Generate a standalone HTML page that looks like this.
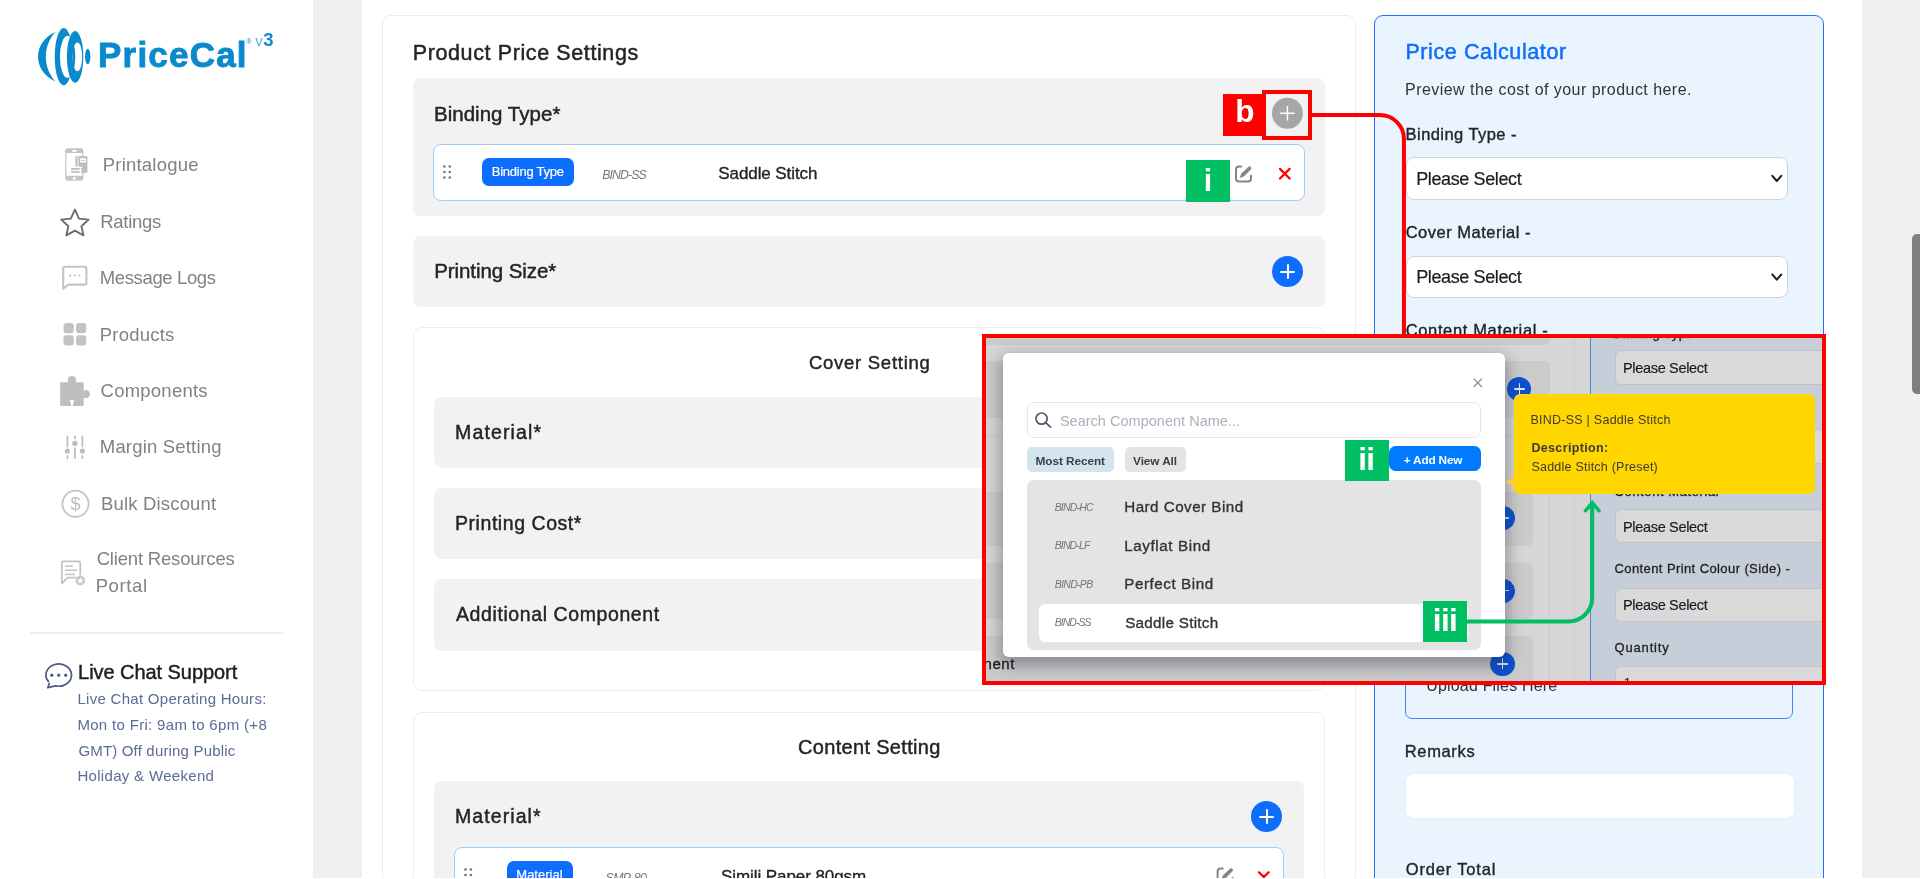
<!DOCTYPE html>
<html lang="en">
<head>
<meta charset="utf-8">
<title>PriceCal v3 - Product Price Settings</title>
<style>
*{box-sizing:border-box;margin:0;padding:0}
html,body{width:1920px;height:879px;overflow:hidden;background:#fff}
body{position:relative;font-family:"Liberation Sans",sans-serif;color:#212529}
.layer{position:absolute;left:0;top:0;width:1920px;height:879px;overflow:hidden;will-change:transform}
.t{position:absolute;white-space:nowrap;display:block}
.abs{position:absolute}
.sec{position:absolute;background:#f2f2f2;border-radius:8px}
.card{position:absolute;border:1px solid #ececf0;border-radius:9px;background:#fff}
.row{position:absolute;background:#fff;border:1px solid #9fcdfb;border-radius:8px}
.badge{position:absolute;background:#0d6efd;border-radius:7px}
.plus{position:absolute;width:31px;height:31px;border-radius:50%;background:#0d6efd}
.plus:before,.plus:after{content:"";position:absolute;background:#fff;left:50%;top:50%}
.plus:before{width:14.6px;height:2px;margin:-1px 0 0 -7.3px;border-radius:1px}
.plus:after{width:2px;height:14.6px;margin:-7.3px 0 0 -1px;border-radius:1px}
.plus.sm:before{width:11.4px;height:1.5px;margin:-.75px 0 0 -5.7px;background:#e3e8f3}
.plus.sm:after{width:1.5px;height:11.4px;margin:-5.7px 0 0 -.75px;background:#e3e8f3}
.osel{width:300px;background:#d9d9d9;border:1px solid #bfc3c9;border-radius:6px}
.sel{position:absolute;background:#fff;border:1px solid #cfd3d8;border-radius:8px}
svg{position:absolute;overflow:visible}
</style>
</head>
<body>

<!-- ================= SIDEBAR ================= -->
<div class="layer" id="side">
<svg style="left:0;top:0" width="320" height="879" viewBox="0 0 320 879">
<!-- logo mark -->
<g fill="#0a8acc">
<path d="M55.6 31.9C32.3 42 32.3 71 55.6 81.4C42.7 68 42.7 45 55.6 31.9Z"/>
<path fill-rule="evenodd" d="M63.7 28.1A9 28.6 0 0 1 63.7 85.3A9 28.6 0 0 1 63.7 28.1ZM67.6 35.8A7.7 21.1 0 0 1 67.6 78A7.7 21.1 0 0 1 67.6 35.8Z"/>
<path fill-rule="evenodd" d="M75.1 31.1A8.2 25.8 0 0 1 75.1 82.7A8.2 25.8 0 0 1 75.1 31.1ZM77.4 42.5A4.8 14.4 0 0 1 77.4 71.3A4.8 14.4 0 0 1 77.4 42.5Z"/>
<ellipse cx="87.7" cy="56.5" rx="2.7" ry="7.7"/>
</g>
<!-- printalogue: phone + catalogue -->
<g>
<rect x="65.2" y="148.2" width="18.2" height="32.5" rx="3" fill="#c4c4c4"/>
<rect x="66.4" y="153" width="15.8" height="22.8" fill="#fff"/>
<rect x="72" y="149.9" width="5" height="1.8" rx=".6" fill="#fff"/>
<circle cx="74.3" cy="178.2" r="1.5" fill="#fff"/>
<rect x="75.5" y="156.1" width="11.9" height="16.7" fill="#bdbdbd"/>
<rect x="77.2" y="156.1" width="1.6" height="16.7" fill="#e2e2e2"/>
<rect x="80" y="158.2" width="6" height="4.4" rx=".8" fill="#fff"/>
<rect x="81.3" y="160" width="3.4" height="1" fill="#c4c4c4"/>
<rect x="70.3" y="166.6" width="11.8" height="7" fill="#fff"/>
<rect x="71.1" y="168" width="8.6" height="1.8" fill="#bdbdbd"/><rect x="80.9" y="168" width="1.2" height="1.8" fill="#bdbdbd"/>
<rect x="71.1" y="171" width="8.6" height="1.8" fill="#bdbdbd"/><rect x="80.9" y="171" width="1.2" height="1.8" fill="#bdbdbd"/>
</g>
<!-- ratings star -->
<path d="M74.9 209.6 79 218.6 88.6 219.6 81.4 226.2 83.5 235.4 74.9 230.6 66.3 235.4 68.4 226.2 61.2 219.6 70.8 218.6Z" fill="none" stroke="#6d6d6d" stroke-width="1.9" stroke-linejoin="round"/>
<!-- message logs -->
<g fill="none" stroke="#c4c4c4" stroke-width="2.1" stroke-linejoin="round">
<path d="M63.2 268.2Q63.2 266.8 64.6 266.8H85Q86.4 266.8 86.4 268.2V283.2Q86.4 284.6 85 284.6H68.4L63.2 288.6Z"/>
</g>
<g fill="#c2c2c2"><rect x="69.2" y="274.6" width="2" height="1.8"/><rect x="73.8" y="274.6" width="2" height="1.8"/><rect x="78.4" y="274.6" width="2" height="1.8"/></g>
<!-- products -->
<g fill="#c3c3c3"><rect x="63.5" y="323" width="10.3" height="10.3" rx="3"/><rect x="76" y="323" width="10.3" height="10.3" rx="3"/><rect x="63.5" y="335.3" width="10.3" height="10.3" rx="3"/><rect x="76" y="335.3" width="10.3" height="10.3" rx="3"/></g>
<!-- components puzzle -->
<g fill="#bebebe">
<rect x="60.2" y="382.3" width="23.5" height="23.6" rx="1"/>
<circle cx="71.9" cy="380.1" r="4.1"/><circle cx="85.8" cy="394.1" r="4.2"/>
</g>
<circle cx="71.9" cy="401.6" r="2.1" fill="#fff"/><rect x="71" y="402.5" width="1.9" height="4" fill="#fff"/>
<!-- margin setting sliders -->
<g stroke="#bdbdbd" stroke-width="1.7" stroke-linecap="round">
<path d="M67.4 436.4V446.6M67.4 455.8V458.2M74.9 436.4V438.6M74.9 448V458.2M82.4 436.4V446.6M82.4 455.8V458.2"/>
</g>
<g fill="#bdbdbd"><circle cx="67.4" cy="451" r="2.6"/><circle cx="74.9" cy="443.4" r="2.7"/><circle cx="82.4" cy="451" r="2.6"/></g>
<!-- bulk discount -->
<circle cx="75.5" cy="503.8" r="13.1" fill="none" stroke="#c4c4c4" stroke-width="1.7"/>
<text x="75.6" y="510.2" font-family="Liberation Sans, sans-serif" font-size="18" fill="#bdbdbd" text-anchor="middle">$</text>
<!-- client resources -->
<g fill="none" stroke="#c2c2c2" stroke-width="1.7" stroke-linejoin="round">
<path d="M61.8 562.9Q61.8 561.4 63.3 561.4H78.8Q80.3 561.4 80.3 562.9V577.6H67.6L61.8 583.6Z"/>
</g>
<g fill="#c6c6c6"><rect x="65" y="565.2" width="7.8" height="1.6"/><rect x="65" y="569.5" width="12" height="1.6"/><rect x="65" y="573.6" width="10" height="1.6"/></g>
<circle cx="80.3" cy="580.6" r="5" fill="#c2c2c2" stroke="#fff" stroke-width=".8"/>
<path d="M80.3 577.3 81.3 579.6 83.7 579.8 81.9 581.4 82.4 583.8 80.3 582.5 78.2 583.8 78.7 581.4 76.9 579.8 79.3 579.6Z" fill="#fff"/>
<!-- live chat -->
<g fill="none" stroke="#4a5a85" stroke-width="1.7" stroke-linejoin="round">
<path d="M48.9 682.2A12.8 11.1 0 1 1 55.4 685.8L47.7 687.7L49.6 682.9"/>
</g>
<g fill="#4a5a85"><circle cx="51.8" cy="675.2" r="1.6"/><circle cx="58.7" cy="675.2" r="1.6"/><circle cx="65.7" cy="675.2" r="1.6"/></g>
</svg>

<div class="abs" style="left:30px;top:632px;width:253px;height:2px;background:#ededed"></div>
<span class="t" style="left:98.00px;top:37.00px;font-size:35px;line-height:35px;color:#0a8acc;font-weight:700;letter-spacing:1.206px;-webkit-text-stroke:0.9px currentColor;">PriceCal</span>
<span class="t" style="left:246.30px;top:38.00px;font-size:7px;line-height:7px;color:#0b8bd6;">®</span>
<span class="t" style="left:255.30px;top:33.00px;font-size:15px;line-height:15px;color:#5fb0e0;">v</span>
<span class="t" style="left:263.30px;top:31.00px;font-size:18.5px;line-height:18.5px;color:#0b8bd6;font-weight:700;">3</span>
<span class="t" style="left:102.70px;top:156.00px;font-size:18.5px;line-height:18.5px;color:#828282;letter-spacing:0.220px;">Printalogue</span>
<span class="t" style="left:100.30px;top:213.00px;font-size:18.5px;line-height:18.5px;color:#828282;letter-spacing:-0.296px;">Ratings</span>
<span class="t" style="left:99.80px;top:269.00px;font-size:18.5px;line-height:18.5px;color:#828282;letter-spacing:-0.379px;">Message Logs</span>
<span class="t" style="left:99.80px;top:326.00px;font-size:18.5px;line-height:18.5px;color:#828282;letter-spacing:0.206px;">Products</span>
<span class="t" style="left:100.60px;top:382.00px;font-size:18.5px;line-height:18.5px;color:#828282;letter-spacing:0.228px;">Components</span>
<span class="t" style="left:99.80px;top:438.00px;font-size:18.5px;line-height:18.5px;color:#828282;letter-spacing:0.185px;">Margin Setting</span>
<span class="t" style="left:101.00px;top:495.00px;font-size:18.5px;line-height:18.5px;color:#828282;letter-spacing:0.170px;">Bulk Discount</span>
<span class="t" style="left:96.70px;top:550.00px;font-size:18.5px;line-height:18.5px;color:#828282;letter-spacing:-0.188px;">Client Resources</span>
<span class="t" style="left:95.70px;top:577.00px;font-size:18.5px;line-height:18.5px;color:#828282;letter-spacing:0.596px;">Portal</span>
<span class="t" style="left:78.10px;top:662.00px;font-size:20px;line-height:20px;color:#1e1e1e;letter-spacing:-0.059px;-webkit-text-stroke:0.44px currentColor;">Live Chat Support</span>
<span class="t" style="left:77.40px;top:691.00px;font-size:15px;line-height:15px;color:#5b6b96;letter-spacing:0.288px;">Live Chat Operating Hours:</span>
<span class="t" style="left:77.40px;top:717.00px;font-size:15px;line-height:15px;color:#5b6b96;letter-spacing:0.321px;">Mon to Fri: 9am to 6pm (+8</span>
<span class="t" style="left:78.40px;top:743.00px;font-size:15px;line-height:15px;color:#5b6b96;letter-spacing:0.176px;">GMT) Off during Public</span>
<span class="t" style="left:77.40px;top:768.00px;font-size:15px;line-height:15px;color:#5b6b96;letter-spacing:0.317px;">Holiday &amp; Weekend</span>
</div>

<!-- gray gutters -->
<div class="abs" style="left:313px;top:0;width:49px;height:879px;background:#f0f0f0"></div>
<div class="abs" style="left:1862px;top:0;width:58px;height:879px;background:#f0f0f0"></div>
<div class="abs" style="left:1912px;top:234px;width:14px;height:160px;background:#7f7f7f;border-radius:5px"></div>

<!-- ================= MAIN ================= -->
<div class="layer" id="main">
<div class="card" style="left:382px;top:15px;width:974px;height:900px"></div>

<div class="sec" style="left:413px;top:78px;width:912px;height:138px"></div>
<div class="row" style="left:433px;top:144px;width:872px;height:57px"></div>
<div class="badge" style="left:482px;top:158px;width:92px;height:28px"></div>

<div class="sec" style="left:413px;top:236px;width:912px;height:71px"></div>
<div class="plus" style="left:1272px;top:256px"></div>

<div class="card" style="left:413px;top:327px;width:912px;height:364px"></div>
<div class="sec" style="left:434px;top:396.5px;width:870px;height:71px"></div>
<div class="sec" style="left:434px;top:487.5px;width:870px;height:71px"></div>
<div class="sec" style="left:434px;top:578.5px;width:870px;height:72px"></div>

<div class="card" style="left:413px;top:712px;width:912px;height:300px"></div>
<div class="sec" style="left:434px;top:781px;width:870px;height:200px"></div>
<div class="plus" style="left:1251px;top:801px"></div>
<div class="row" style="left:454px;top:847px;width:830px;height:57px"></div>
<div class="badge" style="left:507px;top:861px;width:66px;height:28px"></div>
<svg style="left:0;top:0" width="1920" height="879" viewBox="0 0 1920 879">
<defs>
<g id="drag" fill="#6e7a90"><circle cx="0" cy="0" r="1.35"/><circle cx="5.4" cy="0" r="1.35"/><circle cx="0" cy="5.5" r="1.35"/><circle cx="5.4" cy="5.5" r="1.35"/><circle cx="0" cy="11" r="1.35"/><circle cx="5.4" cy="11" r="1.35"/></g>
<g id="edit" fill="none" stroke="#858585" stroke-width="2" stroke-linecap="round" stroke-linejoin="round">
<path d="M6.2 1H4Q1 1 1 4V13Q1 16 4 16H13Q16 16 16 13V10.2"/>
<path d="M5.6 11.4 6.6 8.2 13.6 1.6Q14.7.8 15.6 1.7Q16.4 2.7 15.6 3.6L8.8 10.4Z" fill="#858585" stroke-width="1"/>
</g>
<g id="xred" fill="none" stroke="#ff0000" stroke-width="2.3" stroke-linecap="round"><path d="M1.2 1.2 10.8 10.8M10.8 1.2 1.2 10.8"/></g>
</defs>
<use href="#drag" x="444.4" y="166.5"/>
<use href="#edit" x="1235" y="165.6"/>
<use href="#xred" x="1278.8" y="167.7"/>
<!-- disabled add button (binding type) -->
<circle cx="1287.4" cy="113.3" r="15.5" fill="#a6a6a6"/>
<path d="M1280.2 113.3H1294.6M1287.4 106.1V120.5" stroke="#fff" stroke-width="1.5" fill="none"/>
<!-- content material row (cut off by viewport) -->
<use href="#drag" x="465.5" y="869.5"/>
<use href="#edit" x="1216.6" y="867.5"/>
<use href="#xred" x="1257.8" y="871"/>
</svg>

<span class="t" style="left:412.75px;top:43.00px;font-size:21.5px;line-height:21.5px;color:#212529;letter-spacing:0.609px;-webkit-text-stroke:0.47px currentColor;">Product Price Settings</span>
<span class="t" style="left:434.00px;top:104.00px;font-size:20.5px;line-height:20.5px;color:#212529;letter-spacing:0.019px;-webkit-text-stroke:0.45px currentColor;">Binding Type*</span>
<span class="t" style="left:491.70px;top:165.00px;font-size:13px;line-height:13px;color:#fff;letter-spacing:-0.230px;-webkit-text-stroke:0.2px currentColor;">Binding Type</span>
<span class="t" style="left:602.30px;top:169.00px;font-size:12.3px;line-height:12.3px;color:#777;font-style:italic;letter-spacing:-0.913px;">BIND-SS</span>
<span class="t" style="left:718.30px;top:165.00px;font-size:17px;line-height:17px;color:#212529;letter-spacing:-0.085px;-webkit-text-stroke:0.35px currentColor;">Saddle Stitch</span>
<span class="t" style="left:434.20px;top:261.00px;font-size:20.5px;line-height:20.5px;color:#212529;letter-spacing:-0.076px;-webkit-text-stroke:0.45px currentColor;">Printing Size*</span>
<span class="t" style="left:808.90px;top:354.00px;font-size:18.5px;line-height:18.5px;color:#212529;letter-spacing:0.734px;-webkit-text-stroke:0.41px currentColor;">Cover Setting</span>
<span class="t" style="left:455.00px;top:423.00px;font-size:19.5px;line-height:19.5px;color:#212529;letter-spacing:1.156px;-webkit-text-stroke:0.43px currentColor;">Material*</span>
<span class="t" style="left:455.00px;top:514.00px;font-size:19.5px;line-height:19.5px;color:#212529;letter-spacing:0.552px;-webkit-text-stroke:0.43px currentColor;">Printing Cost*</span>
<span class="t" style="left:456.00px;top:605.00px;font-size:19.5px;line-height:19.5px;color:#212529;letter-spacing:0.592px;-webkit-text-stroke:0.43px currentColor;">Additional Component</span>
<span class="t" style="left:798.00px;top:737.00px;font-size:20px;line-height:20px;color:#212529;letter-spacing:0.325px;-webkit-text-stroke:0.44px currentColor;">Content Setting</span>
<span class="t" style="left:455.00px;top:807.00px;font-size:19.5px;line-height:19.5px;color:#212529;letter-spacing:1.081px;-webkit-text-stroke:0.43px currentColor;">Material*</span>
<span class="t" style="left:516.30px;top:868.00px;font-size:13px;line-height:13px;color:#fff;letter-spacing:0.007px;-webkit-text-stroke:0.2px currentColor;">Material</span>
<span class="t" style="left:605.60px;top:872.00px;font-size:12.3px;line-height:12.3px;color:#777;font-style:italic;letter-spacing:-0.616px;">SMP-80</span>
<span class="t" style="left:721.00px;top:868.00px;font-size:17px;line-height:17px;color:#212529;letter-spacing:-0.075px;-webkit-text-stroke:0.35px currentColor;">Simili Paper 80gsm</span>
</div>

<!-- ================= PRICE CALCULATOR ================= -->
<div class="layer" id="calc">
<div class="abs" style="left:1374px;top:15px;width:450px;height:900px;background:#eaf4ff;border:1px solid #1a73f8;border-radius:9px"></div>
<div class="sel" style="left:1405.5px;top:156.5px;width:382px;height:43px"></div>
<div class="sel" style="left:1405.5px;top:255.5px;width:382px;height:42.5px"></div>
<div class="abs" style="left:1405px;top:600px;width:388px;height:119.3px;border:1.4px solid #3d86f7;border-radius:7px"></div>
<div class="abs" style="left:1405.5px;top:773.5px;width:388px;height:44.5px;background:#fff;border-radius:7px;box-shadow:0 0 2px rgba(0,0,0,.08)"></div>
<svg style="left:0;top:0" width="1920" height="879" viewBox="0 0 1920 879" fill="none" stroke="#222" stroke-width="2.1" stroke-linecap="round" stroke-linejoin="round">
<path d="M1772.3 175.9 1776.8 181 1781.3 175.9"/>
<path d="M1772.3 274.5 1776.8 279.6 1781.3 274.5"/>
</svg>

<span class="t" style="left:1405.40px;top:42.00px;font-size:21.5px;line-height:21.5px;color:#0d6efd;letter-spacing:0.601px;-webkit-text-stroke:0.47px currentColor;">Price Calculator</span>
<span class="t" style="left:1405.00px;top:82.00px;font-size:16px;line-height:16px;color:#333;letter-spacing:0.459px;">Preview the cost of your product here.</span>
<span class="t" style="left:1405.60px;top:126.00px;font-size:16.5px;line-height:16.5px;color:#212529;letter-spacing:0.432px;-webkit-text-stroke:0.36px currentColor;">Binding Type -</span>
<span class="t" style="left:1416.20px;top:170.00px;font-size:18px;line-height:18px;color:#1c1c1c;letter-spacing:-0.380px;-webkit-text-stroke:0.2px currentColor;">Please Select</span>
<span class="t" style="left:1405.70px;top:224.00px;font-size:16.5px;line-height:16.5px;color:#212529;letter-spacing:0.496px;-webkit-text-stroke:0.36px currentColor;">Cover Material -</span>
<span class="t" style="left:1416.20px;top:268.00px;font-size:18px;line-height:18px;color:#1c1c1c;letter-spacing:-0.380px;-webkit-text-stroke:0.2px currentColor;">Please Select</span>
<span class="t" style="left:1405.70px;top:322.00px;font-size:16.5px;line-height:16.5px;color:#212529;letter-spacing:0.645px;-webkit-text-stroke:0.36px currentColor;">Content Material -</span>
<span class="t" style="left:1426.25px;top:678.00px;font-size:16px;line-height:16px;color:#333;letter-spacing:0.178px;">Upload Files Here</span>
<span class="t" style="left:1404.80px;top:743.00px;font-size:16.5px;line-height:16.5px;color:#212529;letter-spacing:0.640px;-webkit-text-stroke:0.36px currentColor;">Remarks</span>
<span class="t" style="left:1405.80px;top:861.00px;font-size:16.5px;line-height:16.5px;color:#212529;letter-spacing:0.825px;-webkit-text-stroke:0.36px currentColor;">Order Total</span>
</div>

<!-- ================= OVERLAY (zoomed screenshot callout) ================= -->
<div class="layer" id="overlay" style="clip-path:inset(334px 94px 194px 982px)">
<!-- dimmed page behind the modal (0.8x screenshot) -->
<div class="abs" style="left:982px;top:334px;width:844px;height:351px;background:#d6d6d6"></div>
<div class="abs" style="left:900px;top:300px;width:650px;height:44.7px;background:#cbcbcb;border-radius:6px"></div>
<div class="abs" style="left:900px;top:361px;width:650px;height:57px;background:#cbcbcb;border-radius:6px"></div>
<div class="abs" style="left:900px;top:434.5px;width:650px;height:300px;border:1px solid #c9c9cd;border-radius:7px"></div>
<div class="abs" style="left:900px;top:491.8px;width:632.5px;height:54.5px;background:#cbcbcb;border-radius:6px"></div>
<div class="abs" style="left:900px;top:562.6px;width:632.5px;height:56.1px;background:#cbcbcb;border-radius:6px"></div>
<div class="abs" style="left:900px;top:635.5px;width:632.5px;height:57px;background:#cbcbcb;border-radius:6px"></div>
<div class="abs" style="left:1574px;top:334px;width:1px;height:351px;background:#cdcdcd"></div>
<!-- dimmed plus buttons -->
<div class="plus sm" style="left:1507.3px;top:376.8px;width:24px;height:24px;background:#0b51d1;transform:none"></div>
<div class="plus sm" style="left:1491px;top:506px;width:24px;height:24px;background:#0b51d1"></div>
<div class="plus sm" style="left:1491px;top:578.7px;width:24px;height:24px;background:#0b51d1"></div>
<div class="plus sm" style="left:1490.3px;top:651.5px;width:24.5px;height:24.5px;background:#0b51d1"></div>
<!-- dimmed price calculator -->
<div class="abs" style="left:1590px;top:320px;width:300px;height:400px;background:#c6ced9;border-left:1.4px solid #4f84e0"></div>
<div class="abs osel" style="left:1614.5px;top:350.3px;height:35.2px"></div>
<div class="abs osel" style="left:1614.5px;top:429px;height:35px"></div>
<div class="abs osel" style="left:1614.5px;top:508.5px;height:34px"></div>
<div class="abs osel" style="left:1614.5px;top:587.5px;height:34px"></div>
<div class="abs osel" style="left:1614.5px;top:665.5px;height:34px"></div>
<span class="t" style="left:932.30px;top:656.00px;font-size:15px;line-height:15px;color:#1c1c1c;letter-spacing:0.577px;-webkit-text-stroke:0.33px currentColor;">Component</span>
<span class="t" style="left:1613.50px;top:327.00px;font-size:13px;line-height:13px;color:#1e1e1e;letter-spacing:0.479px;-webkit-text-stroke:0.29px currentColor;">Binding Type -</span>
<span class="t" style="left:1614.50px;top:485.00px;font-size:13px;line-height:13px;color:#1e1e1e;letter-spacing:0.589px;-webkit-text-stroke:0.29px currentColor;">Content Material -</span>
<span class="t" style="left:1623.00px;top:361.00px;font-size:14.5px;line-height:14.5px;color:#17171f;letter-spacing:-0.320px;-webkit-text-stroke:0.15px currentColor;">Please Select</span>
<span class="t" style="left:1623.00px;top:520.00px;font-size:14.5px;line-height:14.5px;color:#17171f;letter-spacing:-0.320px;-webkit-text-stroke:0.15px currentColor;">Please Select</span>
<span class="t" style="left:1623.00px;top:598.00px;font-size:14.5px;line-height:14.5px;color:#17171f;letter-spacing:-0.320px;-webkit-text-stroke:0.15px currentColor;">Please Select</span>
<span class="t" style="left:1614.50px;top:562.00px;font-size:13px;line-height:13px;color:#1e1e1e;letter-spacing:0.404px;-webkit-text-stroke:0.29px currentColor;">Content Print Colour (Side) -</span>
<span class="t" style="left:1614.50px;top:641.00px;font-size:13px;line-height:13px;color:#1e1e1e;letter-spacing:0.834px;-webkit-text-stroke:0.29px currentColor;">Quantity</span>
<span class="t" style="left:1623.50px;top:676.00px;font-size:14px;line-height:14px;color:#1e1e1e;">1</span>
<!-- modal -->
<div class="abs" style="left:1003px;top:353.4px;width:502px;height:303.9px;background:#fff;border-radius:6px;box-shadow:0 6px 16px 2px rgba(40,40,60,.42)"></div>
<svg style="left:1472.6px;top:377.5px" width="9.6" height="9.6" viewBox="0 0 10 10"><path d="M0.6 0.6 9.4 9.4M9.4 0.6 0.6 9.4" stroke="#8a8a8a" stroke-width="1.3" fill="none"/></svg>
<div class="abs" style="left:1027px;top:401.7px;width:453.5px;height:36.6px;border:1px solid #e3e5ea;border-radius:7px;background:#fff"></div>
<svg style="left:1035px;top:411.5px" width="16.5" height="16" viewBox="0 0 16.5 16"><circle cx="6.6" cy="6.6" r="5.6" fill="none" stroke="#4c5672" stroke-width="1.7"/><path d="M10.7 10.7 15.6 15.2" stroke="#4c5672" stroke-width="1.7" stroke-linecap="round"/></svg>
<div class="abs" style="left:1027px;top:447.4px;width:86.8px;height:24.3px;background:#d3e4ef;border-radius:5px"></div>
<div class="abs" style="left:1125px;top:447.4px;width:61px;height:24.3px;background:#e4e4e4;border-radius:5px"></div>
<div class="abs" style="left:1388.9px;top:446.3px;width:92.1px;height:25px;background:#007bff;border-radius:6.5px"></div>
<div class="abs" style="left:1027px;top:480px;width:453.5px;height:169.5px;background:#e4e4e4;border-radius:7px"></div>
<div class="abs" style="left:1039.2px;top:603.8px;width:429px;height:38.2px;background:#fff;border-radius:6px"></div>
<span class="t" style="left:1059.90px;top:414.00px;font-size:14.5px;line-height:14.5px;color:#a9b1bc;letter-spacing:0.017px;">Search Component Name...</span>
<span class="t" style="left:1035.50px;top:456.00px;font-size:11.8px;line-height:11.8px;color:#3a3f47;font-weight:700;letter-spacing:-0.061px;">Most Recent</span>
<span class="t" style="left:1133.10px;top:456.00px;font-size:11.8px;line-height:11.8px;color:#3a3f47;font-weight:700;letter-spacing:-0.092px;">View All</span>
<span class="t" style="left:1403.70px;top:455.00px;font-size:11.8px;line-height:11.8px;color:#fff;font-weight:700;letter-spacing:-0.169px;">+ Add New</span>
<span class="t" style="left:1054.70px;top:502.00px;font-size:10.5px;line-height:10.5px;color:#777;font-style:italic;letter-spacing:-0.819px;">BIND-HC</span>
<span class="t" style="left:1124.20px;top:499.00px;font-size:15.2px;line-height:15.2px;color:#333;letter-spacing:0.477px;-webkit-text-stroke:0.33px currentColor;">Hard Cover Bind</span>
<span class="t" style="left:1054.70px;top:540.00px;font-size:10.5px;line-height:10.5px;color:#777;font-style:italic;letter-spacing:-0.862px;">BIND-LF</span>
<span class="t" style="left:1124.20px;top:538.00px;font-size:15.2px;line-height:15.2px;color:#333;letter-spacing:0.598px;-webkit-text-stroke:0.33px currentColor;">Layflat Bind</span>
<span class="t" style="left:1054.70px;top:579.00px;font-size:10.5px;line-height:10.5px;color:#777;font-style:italic;letter-spacing:-0.681px;">BIND-PB</span>
<span class="t" style="left:1124.20px;top:576.00px;font-size:15.2px;line-height:15.2px;color:#333;letter-spacing:0.565px;-webkit-text-stroke:0.33px currentColor;">Perfect Bind</span>
<span class="t" style="left:1054.70px;top:617.00px;font-size:10.5px;line-height:10.5px;color:#777;font-style:italic;letter-spacing:-0.973px;">BIND-SS</span>
<span class="t" style="left:1125.20px;top:615.00px;font-size:15.2px;line-height:15.2px;color:#333;letter-spacing:0.288px;-webkit-text-stroke:0.33px currentColor;">Saddle Stitch</span>
<!-- yellow tooltip -->
<div class="abs" style="left:1514.2px;top:393.8px;width:300.6px;height:99.9px;background:#ffd600;border-radius:6px"></div>
<svg style="left:1506px;top:476px" width="9" height="12" viewBox="0 0 9 12"><path d="M0 6 9 0V12Z" fill="#ffc93c"/></svg>
<span class="t" style="left:1530.40px;top:414.00px;font-size:12.5px;line-height:12.5px;color:#3a3a3a;letter-spacing:0.255px;">BIND-SS | Saddle Stitch</span>
<span class="t" style="left:1531.40px;top:442.00px;font-size:12.5px;line-height:12.5px;color:#3a3a3a;font-weight:700;letter-spacing:0.349px;">Description:</span>
<span class="t" style="left:1531.40px;top:461.00px;font-size:12.5px;line-height:12.5px;color:#3a3a3a;letter-spacing:0.228px;">Saddle Stitch (Preset)</span>

</div>

<!-- ================= ANNOTATIONS ================= -->
<div class="layer" id="ann">
<!-- red frame of the zoomed callout -->
<div class="abs" style="left:982px;top:334px;width:844px;height:351px;border:4px solid #ff0000"></div>
<!-- b : add-button marker + connector -->
<div class="abs" style="left:1222.8px;top:94px;width:42px;height:42px;background:#ff0000"></div>
<div class="abs" style="left:1262px;top:90px;width:50px;height:49.7px;border:4.6px solid #ff0000"></div>
<svg style="left:0;top:0" width="1920" height="879" viewBox="0 0 1920 879" fill="none">
<path d="M1311 115H1380A24 24 0 0 1 1403.95 139V336" stroke="#ff0000" stroke-width="4"/>
<path d="M1466 621.4H1568.6A23.6 23.6 0 0 0 1592.2 597.8V503.5" stroke="#00bf63" stroke-width="4"/>
<path d="M1585.5 510.7 1592.2 502.8 1598.9 510.7" stroke="#00bf63" stroke-width="3.6" stroke-linecap="round" stroke-linejoin="miter"/>
</svg>
<!-- green step markers -->
<div class="abs" style="left:1186.4px;top:159.8px;width:43.7px;height:41.8px;background:#00bf63"></div>
<div class="abs" style="left:1345px;top:439.6px;width:43.8px;height:41.4px;background:#00bf63"></div>
<div class="abs" style="left:1423px;top:600.5px;width:44px;height:41.5px;background:#00bf63"></div>

<span class="t" style="left:1235.30px;top:96.00px;font-size:31.5px;line-height:31.5px;color:#fff;font-weight:700;">b</span>
<span class="t" style="left:1203.70px;top:165.00px;font-size:30.5px;line-height:30.5px;color:#fff;font-weight:700;">i</span>
<span class="t" style="left:1358.20px;top:444.00px;font-size:31.4px;line-height:31.4px;color:#fff;font-weight:700;letter-spacing:-0.721px;">ii</span>
<span class="t" style="left:1432.70px;top:605.00px;font-size:31.4px;line-height:31.4px;color:#fff;font-weight:700;letter-spacing:-0.521px;">iii</span>
</div>

<!-- last pixel row of the capture is blank -->
<div class="abs" style="left:0;top:878px;width:1920px;height:1px;background:#fff"></div>
</body>
</html>
